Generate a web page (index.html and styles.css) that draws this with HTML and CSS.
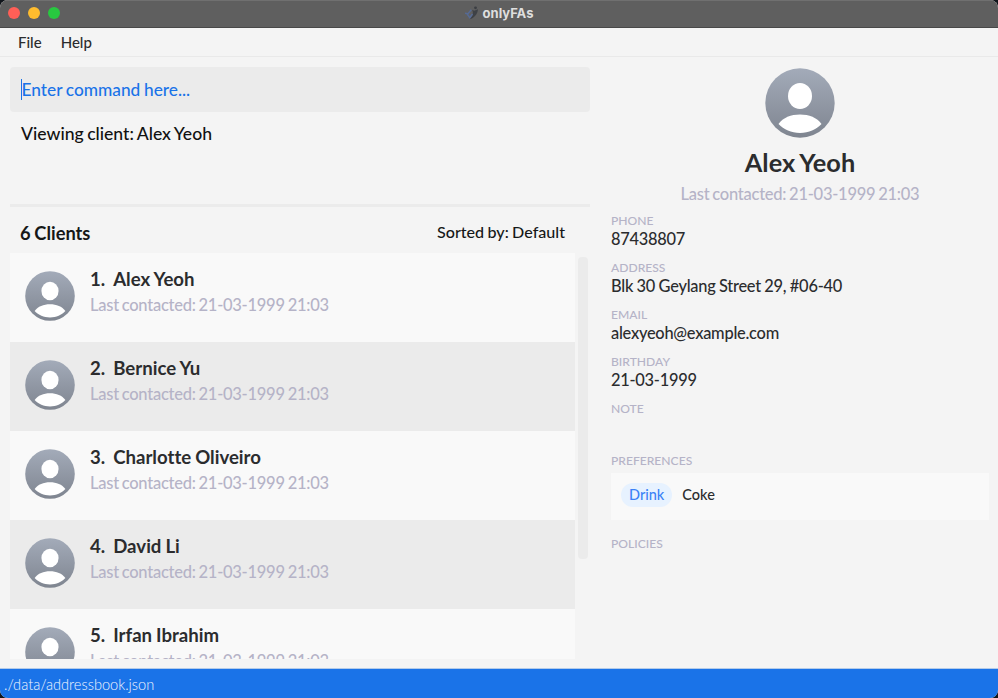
FILE: index.html
```html
<!DOCTYPE html>
<html lang="en">
<head>
<meta charset="utf-8">
<title>onlyFAs</title>
<link rel="stylesheet" href="styles.css">
</head>
<body>
<svg class="defs" width="0" height="0" aria-hidden="true">
  <defs>
    <linearGradient id="shade" x1="0" y1="0" x2="0" y2="1"><stop offset="0" stop-color="#a3abb9"/><stop offset="1" stop-color="#7f8590"/></linearGradient>
    <symbol id="person" viewBox="0 0 70 70">
      <circle cx="35" cy="35" r="34.700" fill="url(#shade)"/>
      <ellipse cx="35" cy="28" rx="12" ry="13" fill="#fff"/>
      <path d="M13.500 56C18 49.500 26 46.500 35 46.500S52 49.500 56.500 56C51 61.500 44 65 35 65S19 61.500 13.500 56Z" fill="#fff"/>
    </symbol>
  </defs>
</svg>
<div class="window">
  <header class="titlebar">
    <div class="lights"><i class="red"></i><i class="yellow"></i><i class="green"></i></div>
    <div class="title">
      <svg width="14" height="14" viewBox="0 0 14 14"><circle cx="10.500" cy="1.800" r="1.400" fill="#3b3e43"/><path d="M7 3.800 9.200 4.800 13 3.200C12.500 8 9.500 12 4.500 13.300 7.500 10.500 9 7.500 7 3.800Z" fill="#3e4146"/><path d="M0 7.200 3 7.800 6.300 3.800M2 7.800 4.800 11.800 7.500 8" fill="none" stroke="#566a94" stroke-width="1.500"/></svg>
      <span>onlyFAs</span>
    </div>
  </header>
  <nav class="menu"><span>File</span><span>Help</span></nav>
  <main>
    <section class="left">
      <div class="command"><span class="caret"></span><span>Enter command here...</span></div>
      <div class="result">Viewing client: Alex Yeoh</div>
      <div class="list-head"><b>6 Clients</b><span>Sorted by: Default</span></div>
      <div class="list-area">
        <div class="list">
          <article><svg><use href="#person"/></svg><div><h2><span>1.</span><span>Alex Yeoh</span></h2><p>Last contacted: 21-03-1999 21:03</p></div></article>
          <article><svg><use href="#person"/></svg><div><h2><span>2.</span><span>Bernice Yu</span></h2><p>Last contacted: 21-03-1999 21:03</p></div></article>
          <article><svg><use href="#person"/></svg><div><h2><span>3.</span><span>Charlotte Oliveiro</span></h2><p>Last contacted: 21-03-1999 21:03</p></div></article>
          <article><svg><use href="#person"/></svg><div><h2><span>4.</span><span>David Li</span></h2><p>Last contacted: 21-03-1999 21:03</p></div></article>
          <article><svg><use href="#person"/></svg><div><h2><span>5.</span><span>Irfan Ibrahim</span></h2><p>Last contacted: 21-03-1999 21:03</p></div></article>
        </div>
        <div class="thumb"></div>
      </div>
    </section>
    <section class="details">
      <div class="profile">
        <svg><use href="#person"/></svg>
        <h1>Alex Yeoh</h1>
        <p>Last contacted: 21-03-1999 21:03</p>
      </div>
      <dl>
        <div><dt>PHONE</dt><dd>87438807</dd></div>
        <div><dt>ADDRESS</dt><dd>Blk 30 Geylang Street 29, #06-40</dd></div>
        <div><dt>EMAIL</dt><dd>alexyeoh@example.com</dd></div>
        <div><dt>BIRTHDAY</dt><dd>21-03-1999</dd></div>
        <div class="note"><dt>NOTE</dt><dd></dd></div>
        <div class="prefs"><dt>PREFERENCES</dt><dd><span class="tag">Drink</span><span>Coke</span></dd></div>
        <div><dt>POLICIES</dt><dd></dd></div>
      </dl>
    </section>
  </main>
  <footer>./data/addressbook.json</footer>
</div>
</body>
</html>
```
FILE: styles.css
```css
* { box-sizing: border-box; margin: 0; padding: 0; }
body { width: 998px; height: 698px; overflow: hidden; background: #10151b; font-family: Lato, sans-serif; font-weight: 500; font-variant-ligatures: none; color: #2b2c2e; }
.defs { position: absolute; }
svg { display: block; flex: none; }
.window { height: 698px; display: flex; flex-direction: column; background: #f4f4f4; border-radius: 8px; overflow: hidden; }
.titlebar { height: 28px; flex: none; display: grid; grid-template-columns: 1fr auto 1fr; background: #5f5f5f; border-bottom: 1px solid #484848; box-shadow: inset 0 1px #707070; }
.lights { display: flex; gap: 8px; padding: 7px 0 0 8px; }
.lights i { width: 12px; height: 12px; border-radius: 50%; }
.red { background: #ff5f57; }
.yellow { background: #febc2e; }
.green { background: #28c840; }
.title { display: flex; align-items: center; gap: 4px; height: 26px; font: 700 13px/26px Inter, sans-serif; color: #dedede; }
.menu { height: 29px; flex: none; display: flex; gap: 19px; padding-left: 18px; border-bottom: 1px solid #e9e9e9; font-size: 15px; line-height: 29px; }
main { flex: 1; min-height: 0; display: flex; }
.left { width: 580px; margin: 10px 0 0 10px; display: flex; flex-direction: column; }
.command { height: 45px; flex: none; display: flex; align-items: center; padding-left: 11px; border-radius: 4px; background: #ebebeb; color: #1a73e8; font-size: 17.3px; word-spacing: -.7px; }
.caret { width: 1px; height: 21px; margin-right: -.5px; background: #1a73e8; }
.result { height: 95px; flex: none; padding: 11px; border-bottom: 3px solid #ebebeb; font-size: 17.6px; line-height: 21px; word-spacing: -1px; color: #111; }
.list-head { height: 46px; flex: none; display: flex; justify-content: space-between; padding: 0 25px 0 10px; font-size: 16.1px; line-height: 50px; word-spacing: -.7px; color: #161818; }
.list-head b { font-size: 18.3px; line-height: 53px; }
.list-area { height: 406px; display: flex; gap: 3px; }
.list { width: 565px; overflow: hidden; }
article { height: 89px; display: flex; gap: 15px; padding: 18px 15px; background: #f9f9f9; }
article:nth-child(even) { background: #ebebeb; }
article svg { width: 50px; height: 50px; }
h2 { display: flex; gap: 8px; margin-top: -4px; font-size: 18.6px; font-weight: 700; line-height: 24px; word-spacing: -.5px; }
p { margin-top: 1px; font-size: 16.5px; line-height: 26px; letter-spacing: -.26px; word-spacing: -1px; color: #b5b3c7; }
.thumb { width: 10px; height: 302px; margin-top: 4px; border-radius: 4px; background: #ebebeb; }
.details { width: 378px; margin: 11px 9px 0 21px; }
.profile { display: flex; flex-direction: column; align-items: center; }
.profile svg { width: 70px; height: 70px; }
h1 { margin-top: 8px; font-size: 25.3px; font-weight: 700; line-height: 32px; word-spacing: -1px; }
.profile p { margin-top: 3px; line-height: 26px; }
dl { margin-top: 6px; }
dl > div { height: 47px; }
dt { font-size: 12.1px; line-height: 15px; color: #b5b3c7; }
dd { font-size: 16.4px; line-height: 22px; letter-spacing: -.25px; word-spacing: -.4px; }
dl .note { height: 52px; }
dl .prefs { height: 83px; }
.prefs dd { height: 47px; margin-top: 5px; padding: 10px; display: flex; gap: 10px; background: #f9f9f9; font-size: 14.5px; line-height: 24px; letter-spacing: 0; }
.tag { height: 24px; padding: 0 8px; border-radius: 12px; background: #e7f2ff; color: #3b82f6; }
footer { height: 30px; flex: none; padding-left: 4px; background: #1a73e8; border-top: 1px solid #b3cbe9; color: #f0f6ff; font-size: 14.6px; font-weight: 300; line-height: 31px; }
```
